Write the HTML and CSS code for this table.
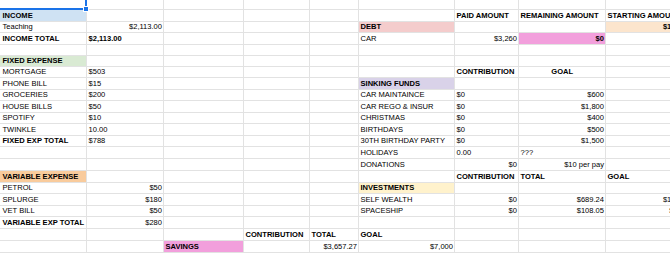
FILE: index.html
```html
<!DOCTYPE html>
<html lang="en">
<head>
<meta charset="utf-8">
<title>Budget</title>
<link rel="stylesheet" href="styles.css">
</head>
<body>
<div class="sheet">
  <!-- row 0 -->
  <div class="c sel"></div><div class="c"></div><div class="c"></div><div class="c"></div><div class="c"></div><div class="c"></div><div class="c"></div><div class="c"></div><div class="c"></div>
  <!-- row 1 -->
  <div class="c a b f-blue">INCOME</div><div class="c"></div><div class="c"></div><div class="c"></div><div class="c"></div><div class="c"></div><div class="c b">PAID AMOUNT</div><div class="c b">REMAINING AMOUNT</div><div class="c b">STARTING AMOUNT</div>
  <!-- row 2 -->
  <div class="c a">Teaching</div><div class="c r">$2,113.00</div><div class="c"></div><div class="c"></div><div class="c"></div><div class="c b f-red">DEBT</div><div class="c"></div><div class="c"></div><div class="c b r f-peach">$1,500</div>
  <!-- row 3 -->
  <div class="c a b">INCOME TOTAL</div><div class="c b">$2,113.00</div><div class="c"></div><div class="c"></div><div class="c"></div><div class="c">CAR</div><div class="c r">$3,260</div><div class="c b r f-pink">$0</div><div class="c"></div>
  <!-- row 4 -->
  <div class="c"></div><div class="c"></div><div class="c"></div><div class="c"></div><div class="c"></div><div class="c"></div><div class="c"></div><div class="c"></div><div class="c"></div>
  <!-- row 5 -->
  <div class="c a b f-green">FIXED EXPENSE</div><div class="c"></div><div class="c"></div><div class="c"></div><div class="c"></div><div class="c"></div><div class="c"></div><div class="c"></div><div class="c"></div>
  <!-- row 6 -->
  <div class="c a">MORTGAGE</div><div class="c">$503</div><div class="c"></div><div class="c"></div><div class="c"></div><div class="c"></div><div class="c b">CONTRIBUTION</div><div class="c b ctr">GOAL</div><div class="c"></div>
  <!-- row 7 -->
  <div class="c a">PHONE BILL</div><div class="c">$15</div><div class="c"></div><div class="c"></div><div class="c"></div><div class="c b f-purple">SINKING FUNDS</div><div class="c"></div><div class="c"></div><div class="c"></div>
  <!-- row 8 -->
  <div class="c a">GROCERIES</div><div class="c">$200</div><div class="c"></div><div class="c"></div><div class="c"></div><div class="c">CAR MAINTAINCE</div><div class="c">$0</div><div class="c r">$600</div><div class="c"></div>
  <!-- row 9 -->
  <div class="c a">HOUSE BILLS</div><div class="c">$50</div><div class="c"></div><div class="c"></div><div class="c"></div><div class="c">CAR REGO &amp; INSUR</div><div class="c">$0</div><div class="c r">$1,800</div><div class="c"></div>
  <!-- row 10 -->
  <div class="c a">SPOTIFY</div><div class="c">$10</div><div class="c"></div><div class="c"></div><div class="c"></div><div class="c">CHRISTMAS</div><div class="c">$0</div><div class="c r">$400</div><div class="c"></div>
  <!-- row 11 -->
  <div class="c a">TWINKLE</div><div class="c">10.00</div><div class="c"></div><div class="c"></div><div class="c"></div><div class="c">BIRTHDAYS</div><div class="c">$0</div><div class="c r">$500</div><div class="c"></div>
  <!-- row 12 -->
  <div class="c a b">FIXED EXP TOTAL</div><div class="c">$788</div><div class="c"></div><div class="c"></div><div class="c"></div><div class="c">30TH BIRTHDAY PARTY</div><div class="c">$0</div><div class="c r">$1,500</div><div class="c"></div>
  <!-- row 13 -->
  <div class="c"></div><div class="c"></div><div class="c"></div><div class="c"></div><div class="c"></div><div class="c">HOLIDAYS</div><div class="c">0.00</div><div class="c">???</div><div class="c"></div>
  <!-- row 14 -->
  <div class="c"></div><div class="c"></div><div class="c"></div><div class="c"></div><div class="c"></div><div class="c">DONATIONS</div><div class="c r">$0</div><div class="c r">$10 per pay</div><div class="c"></div>
  <!-- row 15 -->
  <div class="c a b f-orange">VARIABLE EXPENSE</div><div class="c"></div><div class="c"></div><div class="c"></div><div class="c"></div><div class="c"></div><div class="c b">CONTRIBUTION</div><div class="c b">TOTAL</div><div class="c b">GOAL</div>
  <!-- row 16 -->
  <div class="c a">PETROL</div><div class="c r">$50</div><div class="c"></div><div class="c"></div><div class="c"></div><div class="c b f-yellow">INVESTMENTS</div><div class="c"></div><div class="c"></div><div class="c"></div>
  <!-- row 17 -->
  <div class="c a">SPLURGE</div><div class="c r">$180</div><div class="c"></div><div class="c"></div><div class="c"></div><div class="c">SELF WEALTH</div><div class="c r">$0</div><div class="c r">$689.24</div><div class="c r">$1,000</div>
  <!-- row 18 -->
  <div class="c a">VET BILL</div><div class="c r">$50</div><div class="c"></div><div class="c"></div><div class="c"></div><div class="c">SPACESHIP</div><div class="c r">$0</div><div class="c r">$108.05</div><div class="c r">$200</div>
  <!-- row 19 -->
  <div class="c a b">VARIABLE EXP TOTAL</div><div class="c r">$280</div><div class="c"></div><div class="c"></div><div class="c"></div><div class="c"></div><div class="c"></div><div class="c"></div><div class="c"></div>
  <!-- row 20 -->
  <div class="c"></div><div class="c"></div><div class="c"></div><div class="c b">CONTRIBUTION</div><div class="c b">TOTAL</div><div class="c b">GOAL</div><div class="c"></div><div class="c"></div><div class="c"></div>
  <!-- row 21 -->
  <div class="c"></div><div class="c"></div><div class="c b f-pink">SAVINGS</div><div class="c"></div><div class="c r">$3,657.27</div><div class="c r">$7,000</div><div class="c"></div><div class="c"></div><div class="c"></div>
  <!-- row 22 -->
  <div class="c"></div><div class="c"></div><div class="c"></div><div class="c"></div><div class="c"></div><div class="c"></div><div class="c"></div><div class="c"></div><div class="c"></div>
</div>
</body>
</html>
```

FILE: styles.css
```css
html, body {
  margin: 0;
  padding: 0;
  background: #ffffff;
  overflow: hidden;
}

.sheet {
  display: grid;
  grid-template-columns: 86px 76px 79px 65px 48px 95px 63px 86px 81px;
  grid-template-rows: 9px 11px 10px 11px 10px 10px 10px 11px 10px 11px 10px 11px 10px 11px 11px 11px 10px 11px 10px 11px 11px 11px 10px;
  gap: 1px;
  background: #e2e2e2;
  width: max-content;
  font-family: "Liberation Sans", Arial, sans-serif;
  font-size: 7.55px;
  color: #000;
}

.c {
  background: #ffffff;
  display: flex;
  align-items: flex-end;
  justify-content: flex-start;
  line-height: 9px;
  padding: 0 1px 1px 1.5px;
  white-space: nowrap;
  overflow: visible;
  min-width: 0;
}

.a { padding-left: 2.5px; }
.b { font-weight: bold; }
.r { justify-content: flex-end; }
.ctr { justify-content: center; }

.f-blue { background: #cfe2f3; }
.f-green { background: #d9ead3; }
.f-orange { background: #f9cb9c; }
.f-red { background: #f4cccc; }
.f-purple { background: #d9d2e9; }
.f-yellow { background: #fff2cc; }
.f-peach { background: #fce5cd; }
.f-pink { background: #f29fdc; }

.sel {
  position: relative;
}
.sel::after {
  content: "";
  position: absolute;
  left: -3px;
  top: -3px;
  right: -1px;
  bottom: -1px;
  border: 2px solid #1a73e8;
}
.sel::before {
  content: "";
  position: absolute;
  right: -3px;
  bottom: -3px;
  width: 4px;
  height: 4px;
  background: #1a73e8;
  border: 1px solid #ffffff;
  z-index: 2;
}
```
